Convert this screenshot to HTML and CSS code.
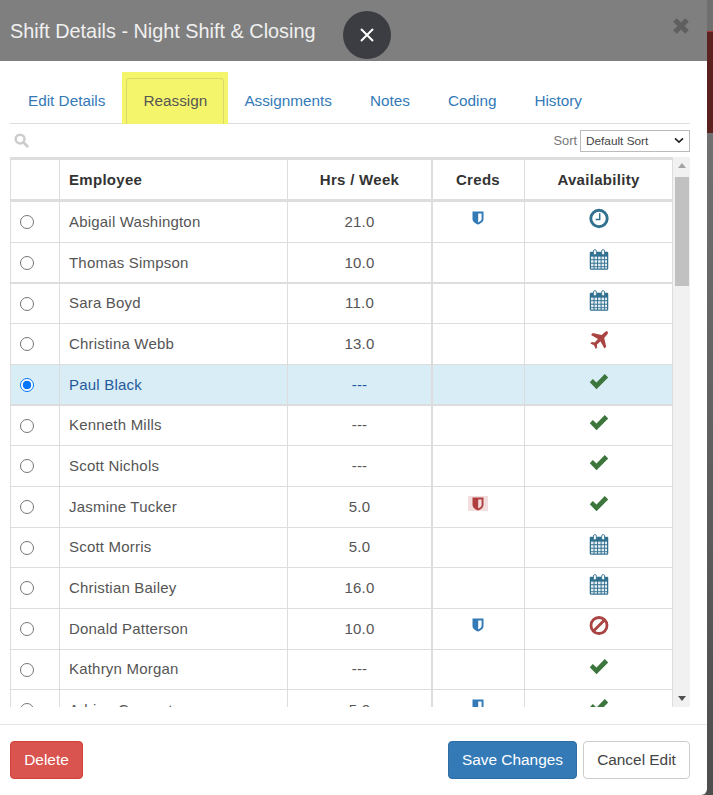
FILE: index.html
```html
<!DOCTYPE html>
<html lang="en">
<head>
<meta charset="utf-8">
<title>Shift Details</title>
<link rel="stylesheet" href="styles.css">
</head>
<body>
<div class="page">
  <div class="modal">
    <header class="modal-header">
      <h1 class="modal-title">Shift Details - Night Shift &amp; Closing</h1>
      <button class="dismiss" type="button" aria-label="Close">
        <svg viewBox="0 0 16 16" width="16" height="16"><path d="M2 2L14 14M14 2L2 14" stroke="#fff" stroke-width="2" fill="none"/></svg>
      </button>
      <span class="x-close">
        <svg viewBox="0 0 18 18" width="18" height="18"><path d="M3 3L15 15M15 3L3 15" stroke="#5f5f5f" stroke-width="5" fill="none"/></svg>
      </span>
    </header>
    <div class="modal-body">
      <nav class="tabs">
        <a class="tab">Edit Details</a>
        <span class="tab-highlight"><a class="tab tab-active">Reassign</a></span>
        <a class="tab">Assignments</a>
        <a class="tab">Notes</a>
        <a class="tab">Coding</a>
        <a class="tab">History</a>
      </nav>
      <div class="toolbar">
        <svg class="search-icon" viewBox="0 0 16 16" width="15" height="15"><circle cx="6.5" cy="6.5" r="4.7" fill="none" stroke="#ccc" stroke-width="2.6"/><path d="M10 10L14.2 14.2" stroke="#ccc" stroke-width="3" stroke-linecap="round"/></svg>
        <span class="sort-label">Sort</span>
        <span class="sort-select">Default Sort
          <svg viewBox="0 0 12 8" width="10" height="7"><path d="M1.2 1.5L6 6L10.8 1.5" stroke="#222" stroke-width="2" fill="none"/></svg>
        </span>
      </div>
      <div class="grid-wrap">
        <div class="grid-clip">
          <table class="grid">
            <colgroup><col class="c-radio"><col class="c-name"><col class="c-hrs"><col class="c-creds"><col class="c-avail"></colgroup>
            <thead>
              <tr><th></th><th class="left">Employee</th><th>Hrs / Week</th><th class="creds">Creds</th><th>Availability</th></tr>
            </thead>
            <tbody>
              <tr class="h41"><td><span class="radio"></span></td><td class="left">Abigail Washington</td><td class="num">21.0</td><td class="creds"><svg class="shield"><use href="#shield-blue"/></svg></td><td><svg class="ico"><use href="#clock"/></svg></td></tr>
              <tr class="h41 thick"><td><span class="radio"></span></td><td class="left">Thomas Simpson</td><td class="num">10.0</td><td class="creds"></td><td><svg class="ico"><use href="#cal"/></svg></td></tr>
              <tr class="h40"><td><span class="radio"></span></td><td class="left">Sara Boyd</td><td class="num">11.0</td><td class="creds"></td><td><svg class="ico"><use href="#cal"/></svg></td></tr>
              <tr class="h41"><td><span class="radio"></span></td><td class="left">Christina Webb</td><td class="num">13.0</td><td class="creds"></td><td><svg class="ico"><use href="#plane"/></svg></td></tr>
              <tr class="h41 selected thick"><td><span class="radio on"></span></td><td class="left">Paul Black</td><td class="num">---</td><td class="creds"></td><td><svg class="ico"><use href="#check"/></svg></td></tr>
              <tr class="h40"><td><span class="radio"></span></td><td class="left">Kenneth Mills</td><td class="num">---</td><td class="creds"></td><td><svg class="ico"><use href="#check"/></svg></td></tr>
              <tr class="h41"><td><span class="radio"></span></td><td class="left">Scott Nichols</td><td class="num">---</td><td class="creds"></td><td><svg class="ico"><use href="#check"/></svg></td></tr>
              <tr class="h41"><td><span class="radio"></span></td><td class="left">Jasmine Tucker</td><td class="num">5.0</td><td class="creds"><span class="flag"><svg class="shield"><use href="#shield-red"/></svg></span></td><td><svg class="ico"><use href="#check"/></svg></td></tr>
              <tr class="h40"><td><span class="radio"></span></td><td class="left">Scott Morris</td><td class="num">5.0</td><td class="creds"></td><td><svg class="ico"><use href="#cal"/></svg></td></tr>
              <tr class="h41"><td><span class="radio"></span></td><td class="left">Christian Bailey</td><td class="num">16.0</td><td class="creds"></td><td><svg class="ico"><use href="#cal"/></svg></td></tr>
              <tr class="h41"><td><span class="radio"></span></td><td class="left">Donald Patterson</td><td class="num">10.0</td><td class="creds"><svg class="shield"><use href="#shield-blue"/></svg></td><td><svg class="ico"><use href="#ban"/></svg></td></tr>
              <tr class="h40"><td><span class="radio"></span></td><td class="left">Kathryn Morgan</td><td class="num">---</td><td class="creds"></td><td><svg class="ico"><use href="#check"/></svg></td></tr>
              <tr class="h41"><td><span class="radio"></span></td><td class="left">Adrian Carpenter</td><td class="num">5.0</td><td class="creds"><svg class="shield"><use href="#shield-blue"/></svg></td><td><svg class="ico"><use href="#check"/></svg></td></tr>
            </tbody>
          </table>
        </div>
        <div class="scrollbar">
          <span class="arrow-up"></span>
          <span class="thumb"></span>
          <span class="spacer"></span>
          <span class="arrow-down"></span>
        </div>
      </div>
    </div>
    <footer class="modal-footer">
      <button class="btn btn-danger" type="button">Delete</button>
      <span class="footer-gap"></span>
      <button class="btn btn-primary" type="button">Save Changes</button>
      <button class="btn btn-default" type="button">Cancel Edit</button>
    </footer>
  </div>
  <div class="backdrop-strip"><span class="strip-top"></span><span class="strip-red"></span><span class="strip-rest"></span></div>
</div>
<svg class="defs" width="0" height="0" aria-hidden="true">
  <symbol id="shield-blue" viewBox="0 0 12 14"><path d="M0.5 0.5H11.5V8C11.5 10.8 8.5 12.6 6 13.6C3.5 12.6 0.5 10.8 0.5 8Z" fill="#337ab7"/><path d="M6.2 2.4H9.6V7.8C9.6 9.6 7.8 10.8 6.2 11.4Z" fill="#fff"/></symbol>
  <symbol id="shield-red" viewBox="0 0 12 14"><path d="M0.5 0.5H11.5V8C11.5 10.8 8.5 12.6 6 13.6C3.5 12.6 0.5 10.8 0.5 8Z" fill="#b04040"/><path d="M6.2 2.4H9.6V7.8C9.6 9.6 7.8 10.8 6.2 11.4Z" fill="#f2dede"/></symbol>
  <symbol id="clock" viewBox="0 0 20 20"><circle cx="10" cy="10" r="8.2" fill="none" stroke="#31708f" stroke-width="2.9"/><path d="M10.7 4.8V11H6.6" fill="none" stroke="#31708f" stroke-width="1.5"/></symbol>
  <symbol id="cal" viewBox="0 0 20 22"><rect x="0.3" y="3" width="19.4" height="18.7" rx="1.2" fill="#31708f"/><g fill="#e4eef3"><rect x="1.6" y="8" width="2.7" height="2.7"/><rect x="5.3" y="8" width="2.7" height="2.7"/><rect x="9" y="8" width="2.7" height="2.7"/><rect x="12.7" y="8" width="2.7" height="2.7"/><rect x="16.3" y="8" width="2.1" height="2.7"/><rect x="1.6" y="11.7" width="2.7" height="2.7"/><rect x="5.3" y="11.7" width="2.7" height="2.7"/><rect x="9" y="11.7" width="2.7" height="2.7"/><rect x="12.7" y="11.7" width="2.7" height="2.7"/><rect x="16.3" y="11.7" width="2.1" height="2.7"/><rect x="1.6" y="15.4" width="2.7" height="2.7"/><rect x="5.3" y="15.4" width="2.7" height="2.7"/><rect x="9" y="15.4" width="2.7" height="2.7"/><rect x="12.7" y="15.4" width="2.7" height="2.7"/><rect x="16.3" y="15.4" width="2.1" height="2.7"/><rect x="1.6" y="19" width="2.7" height="1.5"/><rect x="5.3" y="19" width="2.7" height="1.5"/><rect x="9" y="19" width="2.7" height="1.5"/><rect x="12.7" y="19" width="2.7" height="1.5"/><rect x="16.3" y="19" width="2.1" height="1.5"/></g><rect x="4.2" y="0.6" width="3" height="5.6" rx="1.5" fill="#fff" stroke="#31708f" stroke-width="0.9"/><rect x="12.8" y="0.6" width="3" height="5.6" rx="1.5" fill="#fff" stroke="#31708f" stroke-width="0.9"/></symbol>
  <symbol id="plane" viewBox="0 0 20 20"><path d="M17.8 0.8C19 1 19.3 2.2 18.6 3.4L15.2 7.4L17.2 16.2L15.4 18L11.4 10.8L7.8 14.2L8.2 17L6.8 18.4L5 14.8L1.4 13L2.8 11.6L5.6 12L9 8.4L2 4.4L3.8 2.6L12.6 4.6L16.4 1.2C16.8 0.9 17.3 0.7 17.8 0.8Z" fill="#a94442"/></symbol>
  <symbol id="check" viewBox="0 0 20 16"><path d="M0.8 8.8L3.8 5.4L7.5 9L15.8 0.6L19.2 4L7.5 15.8Z" fill="#3c763d"/></symbol>
  <symbol id="ban" viewBox="0 0 20 20"><circle cx="10" cy="10" r="8" fill="none" stroke="#a94442" stroke-width="2.8"/><path d="M4.5 15.5L15.5 4.5" stroke="#a94442" stroke-width="2.8"/></symbol>
</svg>
</body>
</html>
```
FILE: styles.css
```css
* { box-sizing: border-box; }
html, body { margin: 0; padding: 0; }
body { width: 713px; height: 795px; overflow: hidden; font-family: "Liberation Sans", Arial, sans-serif; font-size: 14px; color: #333; background: #fff; }
.page { display: flex; height: 795px; background: #555; }
.modal { width: 707px; height: 795px; display: flex; flex-direction: column; background: #fff; border-bottom-right-radius: 6px; }
.backdrop-strip { width: 6px; height: 795px; display: flex; flex-direction: column; }
.strip-top { height: 32px; background: #6f6f6f; border-bottom: 1px solid #a33; }
.strip-red { height: 101px; background: #5c2220; }
.strip-rest { flex: 1; background: linear-gradient(#707070, #4d4d4d); }

.modal-header { height: 61px; flex: none; background: #7f7f7f; display: flex; align-items: flex-start; padding: 0 0 0 10px; }
.modal-title { width: 306px; flex: none; margin: 19px 0 0; font-size: 19.85px; line-height: 24px; font-weight: 400; color: #f0f0f0; white-space: nowrap; }
.dismiss { width: 48px; height: 48px; margin: 11px 0 0 27px; padding: 0; border: 0; border-radius: 50%; background: #3b3d42; display: flex; align-items: center; justify-content: center; }
.x-close { margin: 17px 17px 0 auto; width: 18px; height: 18px; }
.x-close svg { display: block; }

.modal-body { flex: 1; min-height: 0; padding: 10px 17px 0 10px; display: flex; flex-direction: column; }
.tabs { height: 53px; flex: none; display: flex; align-items: flex-end; border-bottom: 1px solid #ddd; }
.tab { display: block; height: 46px; padding: 14px 18px 0; line-height: 20px; font-size: 15.3px; color: #337ab7; white-space: nowrap; margin-right: 2px; }
.tab-highlight { display: block; flex: none; width: 106px; height: 52px; padding: 6px 4px 0 4px; margin: 0 -2px -1px -3px; background: #f5f56b; }
.tab-active { width: 98px; height: 46px; padding: 12px 0 0; text-align: center; margin: 0; color: #555; border: 1px solid #d9d96a; border-bottom: 0; border-radius: 4px 4px 0 0; }

.toolbar { height: 33px; flex: none; display: flex; align-items: center; }
.search-icon { margin-left: 4px; }
.sort-label { margin-left: auto; margin-right: 3px; font-size: 12.8px; color: #777; }
.sort-select { width: 110px; height: 22px; border: 1px solid #bbb; font-size: 11.8px; color: #444; padding: 0 5px; display: flex; align-items: center; justify-content: space-between; background: #fff; }

.grid-wrap { height: 550px; flex: none; display: flex; }
.grid-clip { width: 663px; height: 550px; overflow: hidden; }
.grid { width: 663px; table-layout: fixed; border-collapse: separate; border-spacing: 0; font-size: 15px; letter-spacing: 0.2px; }
.c-radio { width: 50px; } .c-name { width: 228px; } .c-hrs { width: 144px; } .c-creds { width: 93px; } .c-avail { width: 148px; }
.grid th, .grid td { padding: 0; text-align: center; vertical-align: middle; border-right: 1px solid #ddd; border-bottom: 1px solid #ddd; }
.grid th:first-child, .grid td:first-child { border-left: 1px solid #ddd; }
.grid th { height: 45px; border-top: 3px solid #ddd; border-bottom: 3px solid #ddd; font-weight: 700; letter-spacing: 0.3px; color: #333; }
.grid .left { text-align: left; padding-left: 9px; }
.grid .creds { border-left: 1px solid #ddd; padding-right: 1px; }
.h41 td { height: 41px; } .h40 td { height: 40px; }
.grid tr.thick td { border-bottom-width: 2px; height: 41px; }
.grid td { color: #555; }
.grid tr:not(.thick) td.left, .grid tr:not(.thick) td.num { padding-bottom: 2px; }
.selected td { background: #d9edf7; }
.grid .selected td { color: #245a9a; }
.radio { display: block; width: 14px; height: 14px; margin: 0 auto 0 9px; border: 1px solid #767676; border-radius: 50%; background: #fff; }
.radio.on { border: 1px solid #0075ff; background: radial-gradient(circle, #0075ff 0 4px, #fff 4.6px); }
.shield { display: block; width: 12px; height: 14px; margin: -8px auto 0; }
.flag { display: block; width: 20px; height: 15px; margin: -8px auto 0; background: #f2dede; padding-top: 1px; }
.flag .shield { margin: 0 auto; }
.ico { display: block; width: 20px; height: 21px; margin: -7px auto 0; }
.scrollbar { width: 17px; height: 550px; background: #f1f1f1; display: flex; flex-direction: column; align-items: center; }
.arrow-up { margin-top: 6px; border: 4px solid transparent; border-top: 0; border-bottom: 5px solid #a3a3a3; }
.thumb { width: 14px; height: 109px; background: #c1c1c1; margin-top: 9px; }
.spacer { flex: 1; }
.arrow-down { margin-bottom: 6px; border: 4px solid transparent; border-bottom: 0; border-top: 5px solid #505050; }

.modal-footer { height: 71px; flex: none; margin-top: 17px; border-top: 1px solid #e5e5e5; padding: 16px 17px 0 10px; display: flex; align-items: flex-start; gap: 6px; }
.footer-gap { flex: 1; }
.btn { height: 38px; font-family: inherit; font-size: 15.4px; border-radius: 4px; padding: 0; border: 1px solid transparent; }
.btn-danger { width: 73px; background: #d9534f; border-color: #d43f3a; color: #fff; }
.btn-primary { width: 129px; background: #337ab7; border-color: #2e6da4; color: #fff; }
.btn-default { width: 107px; background: #fff; border-color: #ccc; color: #444; }
.defs { position: absolute; }
```
